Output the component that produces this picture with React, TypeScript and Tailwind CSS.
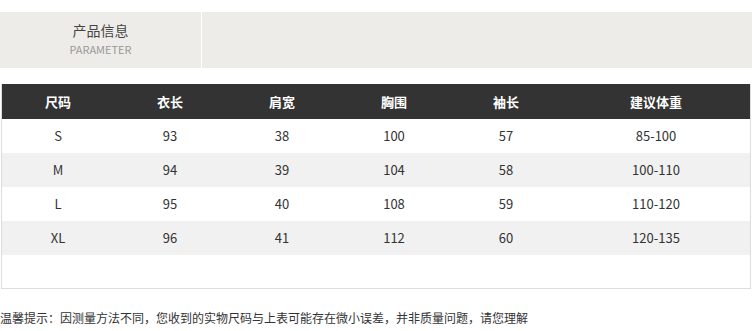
import React from "react";

const headers = ["尺码", "衣长", "肩宽", "胸围", "袖长", "建议体重"];

const rows = [
  ["S", "93", "38", "100", "57", "85-100"],
  ["M", "94", "39", "104", "58", "100-110"],
  ["L", "95", "40", "108", "59", "110-120"],
  ["XL", "96", "41", "112", "60", "120-135"],
];

const colWidths = ["w-[112px]", "w-[112px]", "w-[112px]", "w-[112px]", "w-[112px]", "flex-1"];

const App: React.FC = () => {
  return (
    <div
      className="w-[752px] h-[331px] bg-white text-[#333] overflow-hidden"
      style={{ fontFamily: '"Noto Sans CJK SC", "Microsoft YaHei", sans-serif' }}
    >
      {/* Product info banner */}
      <div className="mt-3 flex h-14 bg-[#eeece8]">
        <div className="w-[202px] flex flex-col items-center justify-center pb-[3px] border-r border-white">
          <span className="text-[14px] leading-5 text-[#444]">产品信息</span>
          <span className="text-[11px] leading-4 mt-[1px] text-[#999]">PARAMETER</span>
        </div>
        <div className="flex-1" />
      </div>

      {/* Size table */}
      <div className="mt-4 ml-px w-[750px] border-x border-b border-[#dddddd]">
        <div className="flex h-[35px] bg-[#333333] text-white text-[13px] font-bold">
          {headers.map((h, i) => (
            <div key={h} className={`${colWidths[i]} flex items-center justify-center`}>
              {h}
            </div>
          ))}
        </div>
        {rows.map((r, ri) => (
          <div
            key={r[0]}
            className={`flex h-[34px] text-[13px] ${ri % 2 === 1 ? "bg-[#f1f1f1]" : "bg-white"}`}
          >
            {r.map((c, ci) => (
              <div key={ci} className={`${colWidths[ci]} flex items-center justify-center`}>
                {c}
              </div>
            ))}
          </div>
        ))}
        <div className="h-[33px]" />
      </div>

      {/* Note */}
      <p className="mt-[19px] text-[12px] leading-5 text-[#333]">
        温馨提示：因测量方法不同，您收到的实物尺码与上表可能存在微小误差，并非质量问题，请您理解
      </p>
    </div>
  );
};

export default App;
